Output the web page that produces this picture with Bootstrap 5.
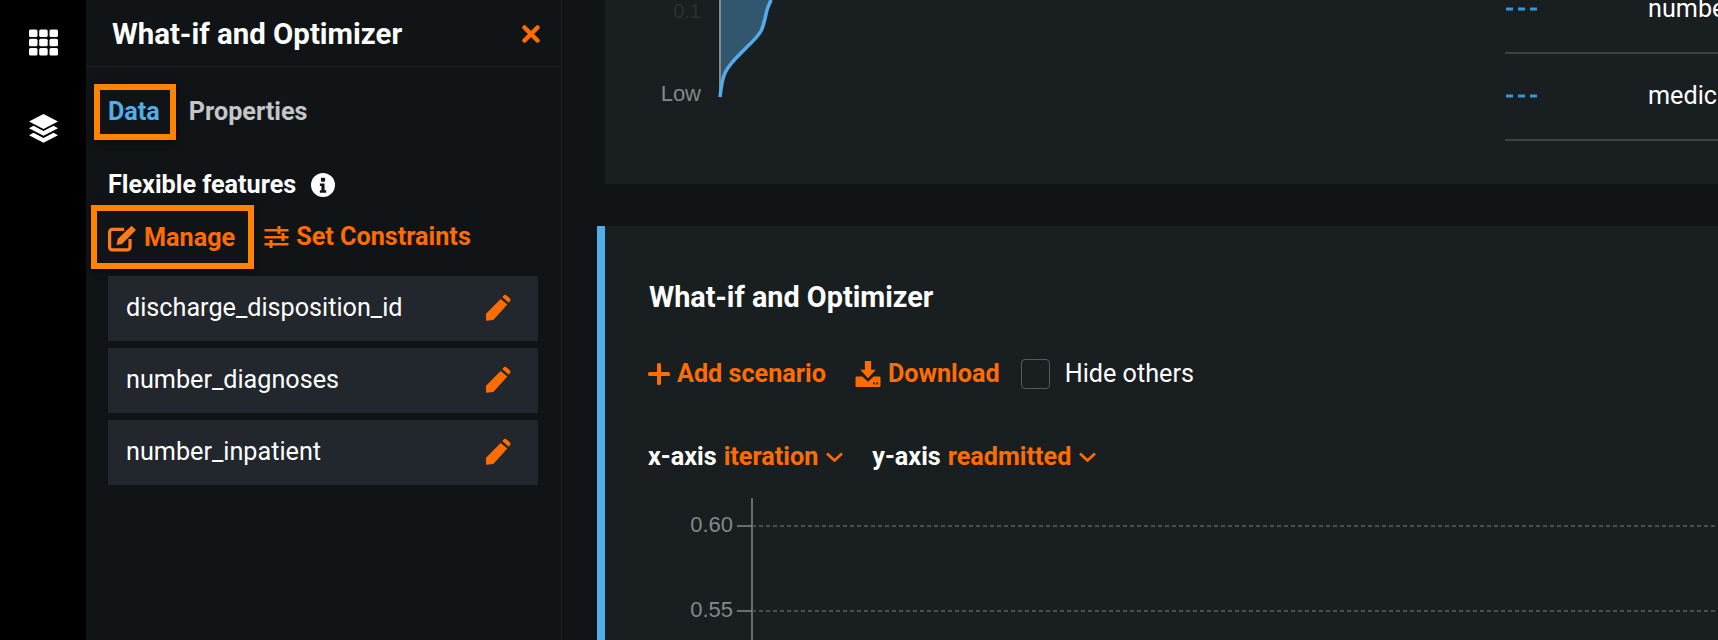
<!DOCTYPE html>
<html lang="en">
<head>
  <meta charset="UTF-8">
  <title>What-if and Optimizer</title>
  <meta name="viewport" content="width=device-width, initial-scale=1">
  <link href="https://cdn.jsdelivr.net/npm/bootstrap@5.3.0/dist/css/bootstrap.min.css" rel="stylesheet">
  <style>
    html, body { height: 100%; }
    body {
      background: #101417;
      color: #fff;
      font-family: Roboto, "Liberation Sans", sans-serif;
      overflow: hidden;
    }
    .app-shell { height: 640px; }
    .side-rail { width: 86px; background: #000; padding-top: 29px; gap: 58px; }
    .side-panel { width: 476px; background: #101417; border-right: 1px solid #1b1f22; }
    .panel-head { height: 67px; border-bottom: 1px solid #1d2125; padding: 2px 21px 0 26px; }
    .panel-title { font-size: 29.400px; font-weight: 700; margin: 0; padding-top: 2px; }
    .tab-row { padding: 17px 0 0 8px; gap: 13px; }
    .tab-item { font-size: 25.2px; font-weight: 700; color: #c4c6c8; }
    .tab-boxed { color: #52ade9; border: 6px solid #ff8300; padding: 6px 10px 6px 8px; line-height: 32px; box-shadow: 0 2px 6px rgba(0,0,0,.5); }
    .feature-head { font-size: 25.2px; font-weight: 700; padding: 30px 0 0 22px; gap: 15px; line-height: 30px; }
    .manage-row { padding: 5px 0 0 5px; gap: 10px; }
    .orange-link { color: #ff6c00; font-weight: 700; font-size: 25.2px; gap: 7px; line-height: 30px; }
    .manage-box { border: 6px solid #ff8300; padding: 12px 13px 10px 11px; box-shadow: 0 2px 6px rgba(0,0,0,.5); }
    .feature-list { padding: 7px 23px 0 22px; gap: 7px; }
    .feature-row { height: 65px; background: #22262d; padding: 0 27px 2px 18px; font-size: 25.2px; }
    .main-area { min-width: 0; padding-left: 35px; }
    .top-panel { height: 184px; margin-left: 8px; background: #191e21; overflow: hidden; }
    .what-panel { margin-top: 42px; background: #191e21; border-left: 8px solid #52ade9; height: 414px; padding: 54px 0 0 44px; }
    .what-title { font-size: 28.800px; font-weight: 700; margin: 0; line-height: 34px; }
    .action-row { margin-top: 45px; gap: 21px; line-height: 30px; margin-left: -1px; }
    .add-link { margin-right: 8px; }
    .hide-box { width: 29px; height: 30px; border: 1px solid #555a5e; border-radius: 4px; margin-right: 15px; }
    .hide-label { font-size: 25.2px; }
    .axis-row { margin-top: 53px; gap: 29px; font-size: 25.2px; font-weight: 700; line-height: 30px; margin-left: -1px; }
    .axis-pick { color: #ff6c00; margin-left: 7px; }
    .chart-area { margin: 18px 0 0 -44px; }
  </style>
</head>
<body>
  <div class="app-shell d-flex">

    <div class="side-rail d-flex flex-column align-items-center flex-shrink-0">
      <svg width="29" height="27" viewBox="0 0 29 27" fill="#fff">
        <rect x="0" y="0.500" width="8.500" height="7.500" rx="1.500"/><rect x="10.200" y="0.500" width="8.500" height="7.500" rx="1.500"/><rect x="20.500" y="0.500" width="8.500" height="7.500" rx="1.500"/>
        <rect x="0" y="9.700" width="8.500" height="7.500" rx="1.500"/><rect x="10.200" y="9.700" width="8.500" height="7.500" rx="1.500"/><rect x="20.500" y="9.700" width="8.500" height="7.500" rx="1.500"/>
        <rect x="0" y="19" width="8.500" height="7.500" rx="1.500"/><rect x="10.200" y="19" width="8.500" height="7.500" rx="1.500"/><rect x="20.500" y="19" width="8.500" height="7.500" rx="1.500"/>
      </svg>
      <svg width="29" height="29" viewBox="0 0 29 29" fill="#fff">
        <path d="M14.500 0 29 7.500 14.500 15 0 7.500Z"/>
        <path d="M4.500 11.800 14.500 17 24.500 11.800 29 14.200 14.500 21.800 0 14.200Z"/>
        <path d="M4.500 18.800 14.500 24 24.500 18.800 29 21.200 14.500 28.800 0 21.200Z"/>
      </svg>
    </div>

    <div class="side-panel flex-shrink-0">
      <div class="panel-head d-flex align-items-center justify-content-between">
        <h1 class="panel-title">What-if and Optimizer</h1>
        <svg width="18" height="18" viewBox="0 0 18 18" stroke="#ff6c00" stroke-width="4.500" stroke-linecap="round"><path d="M2.500 2.500 15.500 15.500M15.500 2.500 2.500 15.500"/></svg>
      </div>

      <div class="tab-row d-flex align-items-center">
        <div class="tab-item tab-boxed">Data</div>
        <div class="tab-item">Properties</div>
      </div>

      <div class="feature-head d-flex align-items-center">
        <span>Flexible features</span>
        <svg width="24" height="24" viewBox="0 0 23 23"><circle cx="11.500" cy="11.500" r="11.500" fill="#fff"/><rect x="9.500" y="4.500" width="4" height="4" rx="1" fill="#101417"/><path d="M8.500 10h4.500v6.500h1.500V19h-6v-2.500H10V12.500H8.500Z" fill="#101417"/></svg>
      </div>

      <div class="manage-row d-flex align-items-center">
        <div class="manage-box orange-link d-flex align-items-center">
          <svg width="29" height="28" viewBox="0 0.500 27 25" fill="none"><path d="M15 5H4a2.500 2.500 0 0 0-2.500 2.500v14A2.500 2.500 0 0 0 4 24h14a2.500 2.500 0 0 0 2.500-2.500V14" stroke="#ff7a1a" stroke-width="3"/><path d="M9 14 22 1.500l4 4L13 18.500l-5 1Z" fill="#ff7a1a"/></svg>
          <span>Manage</span>
        </div>
        <div class="orange-link d-flex align-items-center">
          <svg width="25" height="22" viewBox="0 0 24 22" fill="#ff6c00"><path d="M0 3h24v2.500H0ZM0 10h24v2.500H0ZM0 17h24v2.500H0Z"/><rect x="13" y="0" width="3" height="8"/><rect x="17" y="7" width="3" height="8"/><rect x="5" y="14" width="3" height="8"/></svg>
          <span>Set Constraints</span>
        </div>
      </div>

      <div class="feature-list d-flex flex-column">
        <div class="feature-row d-flex align-items-center justify-content-between">
          <span>discharge_disposition_id</span>
          <svg width="25" height="27" viewBox="0 0 24 26" fill="#ff6c00"><path d="M17 1.500a2 2 0 0 1 2.800 0l3 2.500a2 2 0 0 1 .2 2.800L22 8.500 15.500 3ZM14 4.700l6.500 5.500L7 25l-7 .8V19Z"/></svg>
        </div>
        <div class="feature-row d-flex align-items-center justify-content-between">
          <span>number_diagnoses</span>
          <svg width="25" height="27" viewBox="0 0 24 26" fill="#ff6c00"><path d="M17 1.500a2 2 0 0 1 2.800 0l3 2.500a2 2 0 0 1 .2 2.800L22 8.500 15.500 3ZM14 4.700l6.500 5.500L7 25l-7 .8V19Z"/></svg>
        </div>
        <div class="feature-row d-flex align-items-center justify-content-between">
          <span>number_inpatient</span>
          <svg width="25" height="27" viewBox="0 0 24 26" fill="#ff6c00"><path d="M17 1.500a2 2 0 0 1 2.800 0l3 2.500a2 2 0 0 1 .2 2.800L22 8.500 15.500 3ZM14 4.700l6.500 5.500L7 25l-7 .8V19Z"/></svg>
        </div>
      </div>
    </div>

    <div class="main-area flex-grow-1">
      <div class="top-panel">
        <svg width="1113" height="184" viewBox="605 0 1113 184">
          <path d="M720 0V97C721 88 722 79 725 73C729 64 737 57 744 50C751 43 757 38 761 31C764 25 765 18 767 10C768 6 770 3 771 0Z" fill="#33566f"/>
          <path d="M720 0V97" stroke="#85888a" stroke-width="2"/>
          <path d="M720 97C721 88 722 79 725 73C729 64 737 57 744 50C751 43 757 38 761 31C764 25 765 18 767 10C768 6 770 3 771 0" fill="none" stroke="#52ade9" stroke-width="3.500"/>
          <text x="701" y="18" fill="#2c3033" font-family="Liberation Sans" font-size="20" text-anchor="end">0.1</text>
          <text x="701" y="101" fill="#85888a" font-family="Liberation Sans" font-size="22" text-anchor="end">Low</text>
          <path d="M1506 9H1538M1506 96H1538" stroke="#3498db" stroke-width="3" stroke-dasharray="7 5"/>
          <path d="M1505 53H1718M1505 140H1718" stroke="#4b4f52" stroke-width="1.500"/>
          <text x="1648" y="17" fill="#fff" font-family="Roboto" font-size="25.200">number</text>
          <text x="1648" y="104" fill="#fff" font-family="Roboto" font-size="25.200">medical</text>
        </svg>
      </div>

      <div class="what-panel">
        <h2 class="what-title">What-if and Optimizer</h2>
        <div class="action-row d-flex align-items-center">
          <div class="orange-link add-link d-flex align-items-center">
            <svg width="22" height="22" viewBox="0 0 22 22" fill="#ff6c00"><rect x="9" y="0" width="4" height="22" rx="1.500"/><rect x="0" y="9" width="22" height="4" rx="1.500"/></svg>
            <span>Add scenario</span>
          </div>
          <div class="orange-link d-flex align-items-center">
            <svg width="26" height="26" viewBox="0 0 24 25" fill="#ff6c00"><path d="M9 0h6v8.500h4.500L12 16.500 4.500 8.500H9Z"/><path d="M1 15h5.500l5.500 5 5.500-5H23a1 1 0 0 1 1 1v8a1 1 0 0 1-1 1H1a1 1 0 0 1-1-1v-8a1 1 0 0 1 1-1Z"/><rect x="17" y="20.500" width="1.500" height="2" fill="#191e21"/><rect x="20" y="20.500" width="1.500" height="2" fill="#191e21"/></svg>
            <span>Download</span>
          </div>
          <div class="d-flex align-items-center">
            <div class="hide-box"></div>
            <span class="hide-label">Hide others</span>
          </div>
        </div>
        <div class="axis-row d-flex align-items-center">
          <div class="d-flex align-items-center">
            <span>x-axis</span><span class="axis-pick">iteration</span>
            <svg class="ms-2" width="17" height="10" viewBox="0 0 17 10" fill="none" stroke="#ff6c00" stroke-width="2.600"><path d="M1 1.500 8.500 8.500 16 1.500"/></svg>
          </div>
          <div class="d-flex align-items-center">
            <span>y-axis</span><span class="axis-pick">readmitted</span>
            <svg class="ms-2" width="17" height="10" viewBox="0 0 17 10" fill="none" stroke="#ff6c00" stroke-width="2.600"><path d="M1 1.500 8.500 8.500 16 1.500"/></svg>
          </div>
        </div>
        <div class="chart-area">
          <svg width="1113" height="160" viewBox="605 490 1113 160">
            <path d="M752 498V650" stroke="#85888a" stroke-width="1.500"/>
            <path d="M737 526H752M737 611H752" stroke="#85888a" stroke-width="1.500"/>
            <path d="M752 526H1718M752 611H1718" stroke="#5c6063" stroke-width="1.500" stroke-dasharray="4 3"/>
            <text x="733" y="532" fill="#85888a" font-family="Liberation Sans" font-size="22" text-anchor="end">0.60</text>
            <text x="733" y="617" fill="#85888a" font-family="Liberation Sans" font-size="22" text-anchor="end">0.55</text>
          </svg>
        </div>
      </div>
    </div>

  </div>
</body>
</html>
